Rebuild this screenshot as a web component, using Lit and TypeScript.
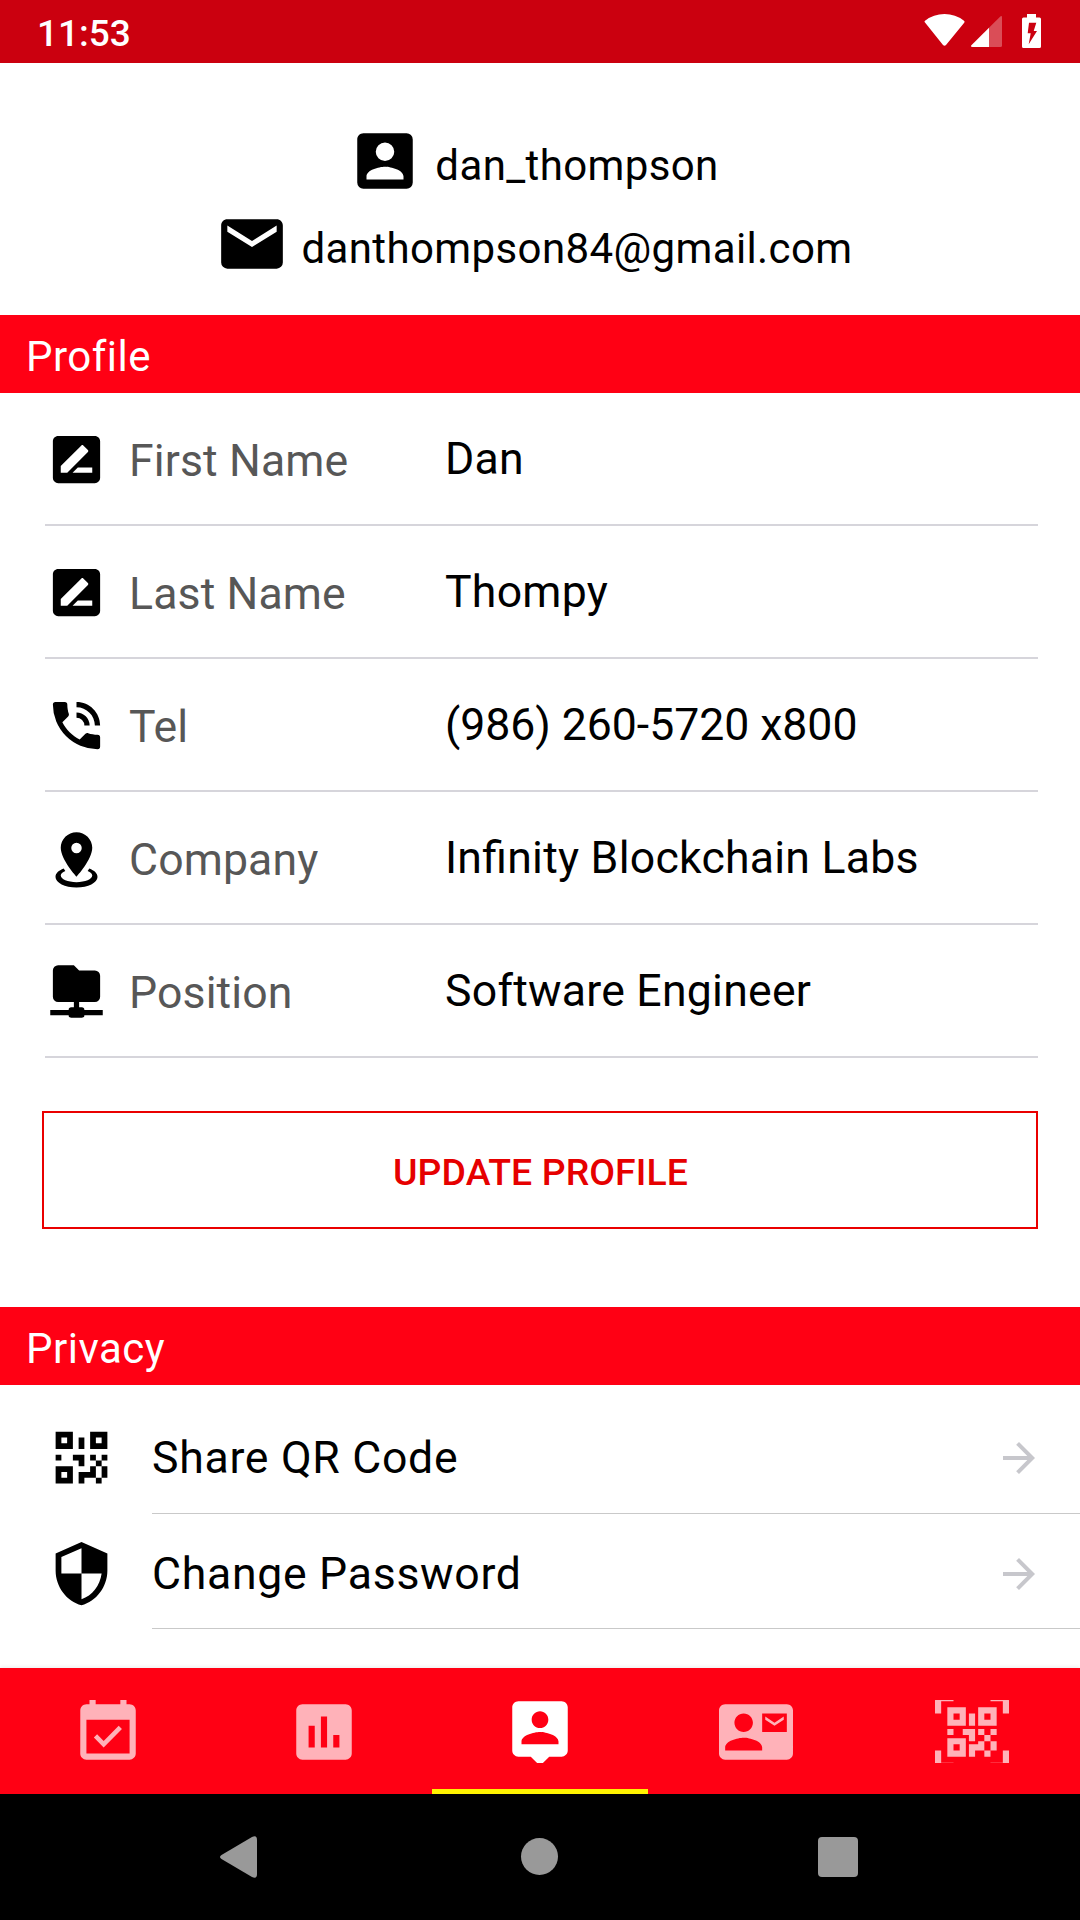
import { LitElement, html, css, svg } from "lit";
import { customElement, property } from "lit/decorators.js";

const ICONS: Record<string, string> = {
  accountBox:
    "M6,17C6,15 10,13.9 12,13.9C14,13.9 18,15 18,17V18H6M15,9A3,3 0 0,1 12,12A3,3 0 0,1 9,9A3,3 0 0,1 12,6A3,3 0 0,1 15,9M3,5V19A2,2 0 0,0 5,21H19A2,2 0 0,0 21,19V5A2,2 0 0,0 19,3H5C3.89,3 3,3.9 3,5Z",
  email:
    "M20,8L12,13L4,8V6L12,11L20,6M20,4H4C2.89,4 2,4.89 2,6V18A2,2 0 0,0 4,20H20A2,2 0 0,0 22,18V6C22,4.89 21.1,4 20,4Z",
  rename:
    "M18,17H10.5L12.5,15H18M6,17V14.5L13.88,6.65C14.07,6.45 14.39,6.45 14.59,6.65L16.35,8.41C16.55,8.61 16.55,8.92 16.35,9.12L8.47,17M19,3H5C3.89,3 3,3.89 3,5V19A2,2 0 0,0 5,21H19A2,2 0 0,0 21,19V5C21,3.89 20.1,3 19,3Z",
  phone:
    "M15,12H17A5,5 0 0,0 12,7V9A3,3 0 0,1 15,12M19,12H21C21,7 16.97,3 12,3V5C15.86,5 19,8.13 19,12M20,15.5C18.75,15.5 17.55,15.3 16.43,14.93C16.08,14.82 15.69,14.9 15.41,15.18L13.21,17.38C10.38,15.94 8.06,13.62 6.62,10.79L8.82,8.59C9.1,8.31 9.18,7.92 9.07,7.57C8.7,6.45 8.5,5.25 8.5,4A1,1 0 0,0 7.5,3H4A1,1 0 0,0 3,4A17,17 0 0,0 20,21A1,1 0 0,0 21,20V16.5A1,1 0 0,0 20,15.5Z",
  marker:
    "M12,2C15.31,2 18,4.66 18,7.95C18,12.41 12,19 12,19C12,19 6,12.41 6,7.95C6,4.66 8.69,2 12,2M12,6A2,2 0 0,0 10,8A2,2 0 0,0 12,10A2,2 0 0,0 14,8A2,2 0 0,0 12,6M20,19C20,21.21 16.42,23 12,23C7.58,23 4,21.21 4,19C4,17.71 5.22,16.56 7.11,15.83L7.75,16.74C6.67,17.19 6,17.81 6,18.5C6,19.88 8.69,21 12,21C15.31,21 18,19.88 18,18.5C18,17.81 17.33,17.19 16.25,16.74L16.89,15.83C18.78,16.56 20,17.71 20,19Z",
  folderNetwork:
    "M3,14V4A2,2 0 0,1 5,2H11L13,4H19A2,2 0 0,1 21,6V14A2,2 0 0,1 19,16H13V18H14A1,1 0 0,1 15,19H22V21H15A1,1 0 0,1 14,22H10A1,1 0 0,1 9,21H2V19H9A1,1 0 0,1 10,18H11V16H5A2,2 0 0,1 3,14Z",
  qrcode:
    "M3,11H5V13H3V11M11,5H13V9H11V5M9,11H13V15H11V13H9V11M15,11H17V13H19V11H21V13H19V15H21V19H19V21H17V19H13V21H11V17H15V15H17V13H15V11M19,19V15H17V19H19M15,3H21V9H15V3M17,5V7H19V5H17M3,3H9V9H3V3M5,5V7H7V5H5M3,15H9V21H3V15M5,17V19H7V17H5Z",
  shield:
    "M12,12H19C18.47,16.11 15.72,19.78 12,20.92V12H5V6.3L12,3.19M12,1L3,5V11C3,16.55 6.84,21.73 12,23C17.16,21.73 21,16.55 21,11V5L12,1Z",
  arrow: "M12 4l-1.41 1.41L16.17 11H4v2h12.17l-5.58 5.59L12 20l8-8z",
  event:
    "M16.53 11.06L15.47 10l-4.88 4.88-2.12-2.12-1.06 1.06L10.59 17l5.94-5.94zM19 3h-1V1h-2v2H8V1H6v2H5c-1.11 0-1.99.9-1.99 2L3 19c0 1.1.89 2 2 2h14c1.1 0 2-.9 2-2V5c0-1.1-.9-2-2-2zm0 16H5V8h14v11z",
  chart:
    "M19 3H5c-1.1 0-2 .9-2 2v14c0 1.1.9 2 2 2h14c1.1 0 2-.9 2-2V5c0-1.1-.9-2-2-2zM9 17H7v-7h2v7zm4 0h-2V7h2v10zm4 0h-2v-4h2v4z",
  personPin:
    "M19 2H5c-1.11 0-2 .9-2 2v14c0 1.1.89 2 2 2h4l3 3 3-3h4c1.1 0 2-.9 2-2V4c0-1.1-.9-2-2-2zm-7 3.3c1.49 0 2.7 1.21 2.7 2.7 0 1.49-1.21 2.7-2.7 2.7-1.49 0-2.7-1.21-2.7-2.7 0-1.49 1.21-2.7 2.7-2.7zM18 16H6v-.9c0-2 4-3.1 6-3.1s6 1.1 6 3.1v.9z",
  contactMail:
    "M21 8V7l-3 2-3-2v1l3 2 3-2zm1-5H2C.9 3 0 3.9 0 5v14c0 1.1.9 2 2 2h20c1.1 0 1.99-.9 1.99-2L24 5c0-1.1-.9-2-2-2zM8 6c1.66 0 3 1.34 3 3s-1.34 3-3 3-3-1.34-3-3 1.34-3 3-3zm6 12H2v-1c0-2 4-3.1 6-3.1s6 1.1 6 3.1v1zm8-6h-8V6h8v6z",
  qrScan:
    "M4,4H10V10H4V4M20,4V10H14V4H20M14,15H16V13H14V11H16V13H18V11H20V13H18V15H20V18H18V20H16V18H13V20H11V16H14V15M16,15V18H18V15H16M4,20V14H10V20H4M6,6V8H8V6H6M16,6V8H18V6H16M6,16V18H8V16H6M4,11H6V13H4V11M9,11H13V15H11V13H9V11M11,6H13V10H11V6M2,2V6H0V2A2,2 0 0,1 2,0H6V2H2M22,0A2,2 0 0,1 24,2V6H22V2H18V0H22M2,18V22H6V24H2A2,2 0 0,1 0,22V18H2M22,22V18H24V22A2,2 0 0,1 22,24H18V22H22Z",
};

@customElement("app-icon")
class AppIcon extends LitElement {
  @property() name = "";

  static styles = css`
    :host {
      display: block;
      flex: none;
    }
    .glyph {
      display: block;
      width: 100%;
      height: 100%;
      fill: currentColor;
    }
  `;

  render() {
    return html`<svg class="glyph" viewBox="0 0 24 24">
      ${svg`<path fill-rule="evenodd" d=${ICONS[this.name] ?? ""}></path>`}
    </svg>`;
  }
}

const FIELDS = [
  { icon: "rename", label: "First Name", value: "Dan" },
  { icon: "rename", label: "Last Name", value: "Thompy" },
  { icon: "phone", label: "Tel", value: "(986) 260-5720 x800", numeric: true },
  { icon: "marker", label: "Company", value: "Infinity Blockchain Labs" },
  { icon: "folderNetwork", label: "Position", value: "Software Engineer" },
];

const ACTIONS = [
  { icon: "qrcode", label: "Share QR Code" },
  { icon: "shield", label: "Change Password" },
];

const TABS = ["event", "chart", "personPin", "contactMail", "qrScan"];
const ACTIVE_TAB = "personPin";

@customElement("app-root")
class AppRoot extends LitElement {
  static styles = css`
    :host {
      display: flex;
      flex-direction: column;
      width: 1080px;
      height: 1920px;
      overflow: hidden;
      background: #fff;
      color: #000;
      font-family: Roboto, "Liberation Sans", sans-serif;
      font-size: 42px;
    }
    * {
      box-sizing: border-box;
    }
    .status {
      flex: none;
      height: 63px;
      display: flex;
      align-items: center;
      justify-content: space-between;
      padding: 2px 39px 0 37px;
      background: #cb000f;
      color: #fff;
    }
    .clock {
      font-size: 37px;
      font-weight: 500;
      line-height: 61px;
      padding-top: 1px;
    }
    .indicators {
      display: block;
      width: 118px;
      height: 34px;
      margin-top: -3px;
    }
    .content {
      flex: none;
      height: 1605px;
      overflow: hidden;
    }
    .identity {
      height: 252px;
      padding: 61px 13px 0 0;
      display: flex;
      flex-direction: column;
      align-items: center;
    }
    .ident-row {
      height: 83px;
      display: flex;
      align-items: flex-start;
      line-height: 50px;
      white-space: nowrap;
      letter-spacing: 0.38px;
    }
    .ident-row app-icon {
      width: 74px;
      height: 74px;
    }
    .ident-text {
      padding: 17px 0 0 13px;
    }
    .section {
      height: 78px;
      padding: 3px 0 0 26px;
      line-height: 78px;
      letter-spacing: 0.5px;
      background: #ff0014;
      color: #fff;
    }
    .field {
      height: 133px;
      margin: 0 42px 0 45px;
      display: grid;
      grid-template-columns: 63px 337px 1fr;
      align-items: center;
      border-bottom: 2px solid #d6d5db;
      font-size: 44.6px;
      line-height: 60px;
    }
    .field app-icon {
      width: 63px;
      height: 63px;
      margin-top: 1.4px;
    }
    .label {
      padding: 4px 0 0 21px;
      color: #575757;
      letter-spacing: 0.12px;
    }
    .value {
      letter-spacing: 0.24px;
      font-feature-settings: "liga" 1;
    }
    .value.numeric {
      letter-spacing: -0.04px;
    }
    .update {
      display: block;
      width: 996px;
      height: 118px;
      margin: 53px 42px 78px;
      padding: 3px 0 0 1px;
      border: 2px solid #ea0000;
      background: transparent;
      color: #e60000;
      font: 500 37.4px Roboto, sans-serif;
      letter-spacing: 0.08px;
    }
    .actions {
      padding-top: 14px;
    }
    .action {
      height: 115px;
      display: flex;
      align-items: stretch;
    }
    .action app-icon {
      width: 69px;
      height: 69px;
    }
    .lead {
      width: 152px;
      padding: 24px 0 0 47px;
    }
    .main {
      flex: 1;
      display: flex;
      align-items: center;
      justify-content: space-between;
      padding: 4px 37px 0 0;
      border-bottom: 1px solid #c9c9c9;
      font-size: 44.6px;
      letter-spacing: 0.7px;
    }
    .action + .action .lead {
      padding-top: 24.5px;
    }
    .action + .action .main {
      padding-top: 6px;
    }
    .main app-icon {
      width: 48px;
      height: 48px;
      color: #c7c7cc;
    }
    .tabs {
      flex: none;
      height: 126px;
      display: grid;
      grid-template-columns: repeat(5, 1fr);
      background: #ff0014;
      color: #ffb2b9;
      z-index: 1;
      box-shadow: 0 -1px 4px rgba(0, 0, 0, 0.08);
    }
    .tab {
      display: flex;
      align-items: center;
      justify-content: center;
      border-bottom: 5px solid transparent;
      padding-top: 6px;
    }
    .tab.active {
      color: #fff;
      border-bottom-color: #fff200;
    }
    .clip {
      height: 63px;
      display: flex;
      align-items: center;
      overflow: hidden;
    }
    .clip app-icon {
      width: 74px;
      height: 74px;
    }
    .system {
      flex: 1;
      background: #000;
      z-index: 1;
    }
    .system-glyphs {
      display: block;
      width: 1080px;
      height: 126px;
    }
  `;

  render() {
    return html`
      <header class="status">
        <span class="clock">11:53</span>
        <svg class="indicators" viewBox="0 0 118 34" fill="#fff">
          <path d="M2 8.600Q.8 7.600 2 6.700Q10.500 0 21.500 0T41 6.700Q42.200 7.600 41.200 8.700L23 31Q21.500 32.600 20 31Z"></path>
          <path opacity=".3" d="M66 13.700L77.300 2.400Q79 1.200 79 3.200V31.500Q79 33 77.500 33H66Z"></path>
          <path d="M66 13.700V33H49.500Q47 32.800 48.400 31.200Z"></path>
          <path
            fill-rule="evenodd"
            d="M104 0H113V3.500H116.500Q118 3.500 118 5V32.500Q118 34 116.500 34H100.500Q99 34 99 32.500V5Q99 3.500 100.500 3.500H104ZM106 8.700L104.700 19.300H107.700L105.700 30.300L114 17H110.700L113.300 8.700Z"
          ></path>
        </svg>
      </header>
      <main class="content">
        <section class="identity">
          <div class="ident-row">
            <app-icon name="accountBox"></app-icon><span class="ident-text">dan_thompson</span>
          </div>
          <div class="ident-row">
            <app-icon name="email"></app-icon><span class="ident-text">danthompson84@gmail.com</span>
          </div>
        </section>
        <div class="section">Profile</div>
        ${FIELDS.map(
          (f) => html`<div class="field">
            <app-icon name=${f.icon}></app-icon>
            <span class="label">${f.label}</span>
            <span class="value ${f.numeric ? "numeric" : ""}">${f.value}</span>
          </div>`
        )}
        <button class="update">UPDATE PROFILE</button>
        <div class="section">Privacy</div>
        <div class="actions">
          ${ACTIONS.map(
            (a) => html`<div class="action">
              <div class="lead"><app-icon name=${a.icon}></app-icon></div>
              <div class="main"><span>${a.label}</span><app-icon name="arrow"></app-icon></div>
            </div>`
          )}
        </div>
      </main>
      <nav class="tabs">
        ${TABS.map(
          (t) => html`<div class="tab ${t === ACTIVE_TAB ? "active" : ""}">
            <div class="clip"><app-icon name=${t}></app-icon></div>
          </div>`
        )}
      </nav>
      <footer class="system">
        <svg class="system-glyphs" viewBox="0 0 1080 126" fill="#999">
          <path d="M221.500 61L252 43Q257 40.500 257 46V80Q257 85.500 252 83L221.500 65Q218.500 63 221.500 61Z"></path>
          <circle cx="539.500" cy="62.500" r="18.500"></circle>
          <rect x="818" y="43" width="40" height="40" rx="4"></rect>
        </svg>
      </footer>
    `;
  }
}
